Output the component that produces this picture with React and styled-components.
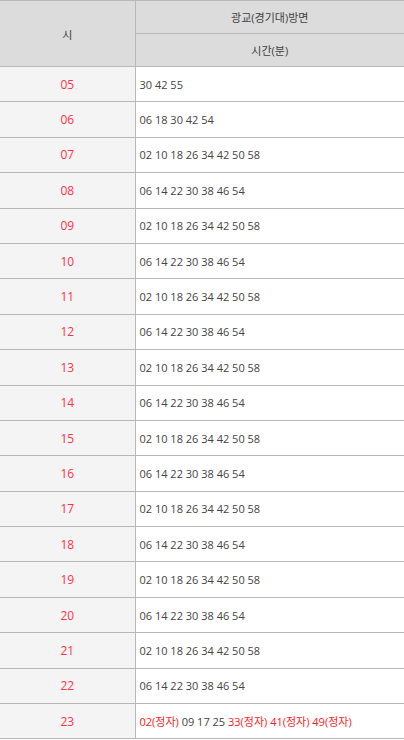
import React from "react";
import styled, { createGlobalStyle } from "styled-components";

const Global = createGlobalStyle`
  html, body { margin: 0; padding: 0; background: #fff; }
  body { font-family: "Open Sans", "Noto Sans CJK KR", sans-serif; }
`;

const Table = styled.table`
  width: 404px;
  border-collapse: collapse;
  table-layout: fixed;
  font-family: "Open Sans", "Noto Sans CJK KR", sans-serif;
  border-top: 1px solid #b8b8b8;
`;

const Th = styled.th`
  background: #dcdcdc;
  color: #3f3f3f;
  font-size: 11px;
  font-weight: normal;
  height: 32px;
  padding: 0;
  border-bottom: 1px solid #b8b8b8;
  border-left: ${(p) => (p.$first ? "none" : "1px solid #b8b8b8")};
  border-right: ${(p) => (p.$first ? "1px solid #b8b8b8" : "none")};
  text-align: center;
  vertical-align: middle;
`;

const Tr = styled.tr`
  height: 35.4px;
`;

const Hour = styled.td`
  background: #f4f4f4;
  color: #ff3348;
  font-size: 12px;
  text-align: center;
  padding: 0;
  border-bottom: 1px solid #b8b8b8;
  border-right: 1px solid #b8b8b8;
  vertical-align: middle;
`;

const Times = styled.td`
  background: #fff;
  color: #444;
  font-size: 11px;
  padding: 0 0 0 4px;
  border-bottom: 1px solid #b8b8b8;
  vertical-align: middle;
  white-space: nowrap;
`;

const Red = styled.span`
  color: #ff1a1a;
`;

const A = "02 10 18 26 34 42 50 58";
const B = "06 14 22 30 38 46 54";

const rows = [
  ["05", "30 42 55"],
  ["06", "06 18 30 42 54"],
  ["07", A],
  ["08", B],
  ["09", A],
  ["10", B],
  ["11", A],
  ["12", B],
  ["13", A],
  ["14", B],
  ["15", A],
  ["16", B],
  ["17", A],
  ["18", B],
  ["19", A],
  ["20", B],
  ["21", A],
  ["22", B],
];

export default function App() {
  return (
    <>
      <Global />
      <Table>
        <colgroup>
          <col style={{ width: "135px" }} />
          <col />
        </colgroup>
        <thead>
          <tr>
            <Th $first rowSpan={2}>시</Th>
            <Th>광교(경기대)방면</Th>
          </tr>
          <tr>
            <Th>시간(분)</Th>
          </tr>
        </thead>
        <tbody>
          {rows.map(([h, t]) => (
            <Tr key={h}>
              <Hour>{h}</Hour>
              <Times>{t}</Times>
            </Tr>
          ))}
          <Tr>
            <Hour>23</Hour>
            <Times>
              <Red>02(정자)</Red> 09 17 25 <Red>33(정자)</Red> <Red>41(정자)</Red>{" "}
              <Red>49(정자)</Red>
            </Times>
          </Tr>
        </tbody>
      </Table>
    </>
  );
}
